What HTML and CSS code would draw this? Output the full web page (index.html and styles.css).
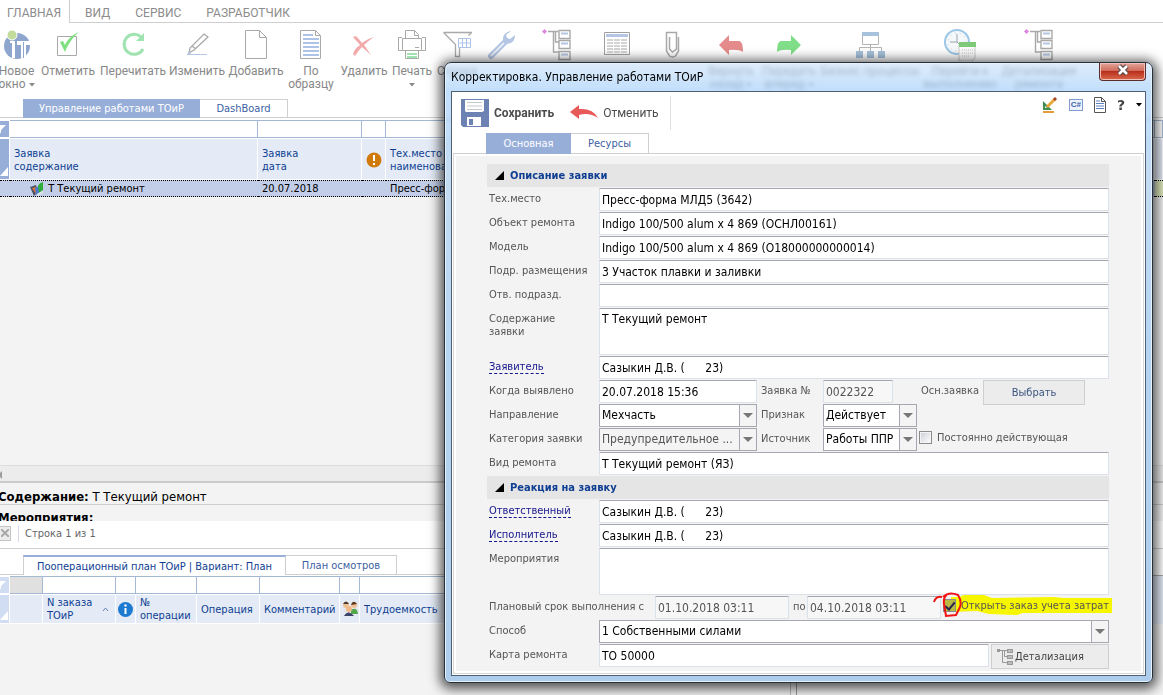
FILE: index.html
```html
<!DOCTYPE html>
<html lang="ru">
<head>
<meta charset="utf-8">
<title>Управление работами ТОиР</title>
<link rel="stylesheet" href="styles.css">
</head>
<body>
<svg class="defs" width="0" height="0" aria-hidden="true">
  <symbol id="tree" viewBox="0 0 30 32">
    <g fill="none" stroke="#a9a9a9" stroke-width="1.4"><path d="M6 2.5h10M11.500 3v20h5M13.500 3v10h3M17 1.500h11v8H17zM17 11.500h11v8H17zM17 22.500h11v8H17z"/></g>
    <path d="M19 3.500h7v2h-7zM19 13.500h7v2h-7zM19 24.500h7v2h-7z" fill="#b4c6e4"/>
    <path d="M2.500 0L5 2.500 2.500 5 0 2.500z" fill="#dd86dd"/>
  </symbol>
  <symbol id="down" viewBox="0 0 6 4"><path d="M0 0h6L3 3.500z" fill="currentColor"/></symbol>
</svg>

<div class="app">
  <nav class="menu">
    <a class="menu-item current" href="#">ГЛАВНАЯ</a>
    <a class="menu-item" href="#">ВИД</a>
    <a class="menu-item" href="#">СЕРВИС</a>
    <a class="menu-item" href="#">РАЗРАБОТЧИК</a>
  </nav>

  <div class="ribbon">
    <button class="tool w34"><svg width="28" height="32" viewBox="0 0 28 32"><circle cx="14" cy="17" r="13" fill="#8ea6cd"/><path d="M7 12h5v17H9V14H7zM14 12h13v4h-4v13h-5V16h-4z" fill="#fff"/><path d="M20.500 13v16" stroke="#8ea6cd"/><circle cx="9" cy="6" r="5" fill="#c3dc9e" stroke="#fff"/></svg><span>Новое<br>окно <svg class="dd"><use href="#down"/></svg></span></button>
    <button class="tool w66"><svg width="26" height="32" viewBox="0 0 26 32"><path d="M2.500 7.500h19v19h-19z" fill="none" stroke="#a9a9a9"/><path d="M5 13l5 10C13 15 18 8 24 3 17 6 12 11 10 16L8 12z" fill="#7fe07f"/></svg><span>Отметить</span></button>
    <button class="tool w64"><svg width="26" height="32" viewBox="0 0 26 32"><path d="M23 20a10 10 0 1 1-2-12" fill="none" stroke="#9fe3b0" stroke-width="3"/><path d="M24 4v8h-8z" fill="#9fe3b0"/></svg><span>Перечитать</span></button>
    <button class="tool w64"><svg width="26" height="32" viewBox="0 0 26 32"><path d="M5 24l1-5L20 5l4 3L10 21zM20 5l4 3M8 17l4 3" fill="none" stroke="#a9a9a9" stroke-width="1.300"/><path d="M3 25.500h20" stroke="#b4c6e4"/><path d="M3 26l2-4 2 3z" fill="#b4c6e4"/></svg><span>Изменить</span></button>
    <button class="tool w54"><svg width="24" height="32" viewBox="0 0 24 32"><path d="M1.500 1.500h14l7 7v21h-21zM15.500 1.500v7h7" fill="#fff" stroke="#a9a9a9"/></svg><span>Добавить</span></button>
    <button class="tool w56"><svg width="24" height="32" viewBox="0 0 24 32"><path d="M1.500 1.500h15l5 5v23h-20zM16.500 1.500v5h5" fill="#fff" stroke="#a9a9a9"/><path d="M4 6h10M4 10h16M4 14h16M4 18h16M4 22h16M4 26h16" stroke="#adc3e8" stroke-width="2"/></svg><span>По<br>образцу</span></button>
    <button class="tool w50"><svg width="26" height="32" viewBox="0 0 26 32"><path d="M2 8c2-1 3-1 5 1l4 5c4-3 8-5 12-6-4 3-7 5-10 8 3 4 5 7 7 10-3-3-6-5-9-8-3 3-5 6-7 9L2 25c1-4 4-7 7-9C7 13 4 11 2 8z" fill="#f2aaaa"/></svg><span>Удалить</span></button>
    <button class="tool w46"><svg width="28" height="32" viewBox="0 0 28 32"><g fill="#fff" stroke="#a9a9a9"><path d="M7.500 9V1.500h9l4 4V9M16.500 1.500v5h4M4.500 9.500h19v12h-19zM4 8.500H.5v13H4M24 8.500h3.500v13H24M7.500 21.500v8h13v-8"/></g><path d="M17 18.500h4" stroke="#a9a9a9"/><path d="M9 25h10M9 28h10" stroke="#9fe3b0" stroke-width="2"/></svg><span>Печать<br><svg class="dd"><use href="#down"/></svg></span></button>
    <button class="tool w44"><svg width="30" height="32" viewBox="0 0 30 32"><path d="M1.500 3.500h28l-3 3M1.500 3.500l12 12v12h4v-12" fill="none" stroke="#a9a9a9" stroke-width="1.300"/><path d="M16.500 9.500h12v9h-12zM20.500 9v10M24.500 9v10M16 14h13" fill="#fff" stroke="#adc3e8"/></svg><span>Строка</span></button>
    <button class="tool w44" aria-label="Сервис"><svg width="28" height="32" viewBox="0 0 28 32"><path d="M4 27L19 12" stroke="#b4c6e4" stroke-width="6" stroke-linecap="round"/><path d="M24 2l-5 4 1 3 3 1 5-4c0 7-5 10-10 8-4-3-2-11 6-12z" fill="#b4c6e4"/><path d="M4 27L17 14" stroke="#f4f7fc" stroke-width="1.500"/></svg></button>
    <button class="tool w68" aria-label="Детали"><svg width="30" height="32"><use href="#tree"/></svg></button>
    <button class="tool w52" aria-label="Формы"><svg width="28" height="32" viewBox="0 0 28 32"><path d="M1.500 3.500h25v22h-25z" fill="#fff" stroke="#a0a0a0"/><path d="M3 5h22v3H3z" fill="#b4c6e4"/><path d="M4 11h20M4 14h20M4 17h20M4 20h20M4 23h20" stroke="#a9a9a9" stroke-dasharray="6 1"/></svg></button>
    <button class="tool w58" aria-label="Файлы"><svg width="18" height="32" viewBox="0 0 18 32"><path d="M15.500 8v14l-3 5q-3 2-6 0l-3-5V3.500h10V20l-4 3-3-3V8" fill="none" stroke="#a9a9a9" stroke-width="1.500"/></svg></button>
    <button class="tool w60"><svg width="24" height="32" viewBox="0 0 24 32"><path d="M0 16L10 6v6h10q4 0 4 11-4-3-14-2v5z" fill="#e58b8b"/></svg><span>Вернуть<br>назад <svg class="dd"><use href="#down"/></svg></span></button>
    <button class="tool w56"><svg width="24" height="32" viewBox="0 0 24 32"><path d="M24 16L14 6v6H4q-4 0-4 11 4-3 14-2v5z" fill="#80de88"/></svg><span>Передать<br>вперед <svg class="dd"><use href="#down"/></svg></span></button>
    <button class="tool w106"><svg width="30" height="32" viewBox="0 0 30 32"><path d="M7.500 5.500h16v10h-16zM15.500 15.500v3M4.500 22v-3.500h22V22M15.500 18v4" fill="none" stroke="#b5b5b5"/><path d="M7 3h17v4H7zM1 22h7v7H1zM12 22h7v7h-7zM23 22h7v7h-7z" fill="#a6c2dd"/></svg><span>Бизнес процессы</span></button>
    <button class="tool w74"><svg width="32" height="32" viewBox="0 0 32 32"><circle cx="13" cy="13" r="12" fill="#f4f8fb" stroke="#9cc6e6" stroke-width="2"/><circle cx="13" cy="13" r="9" fill="none" stroke="#c3cdd3" stroke-dasharray="1 4"/><path d="M13 5v8h-7M13 13l4 4" fill="none" stroke="#9aa4ab"/><path d="M15 16h16v13l-3 3H15z" fill="#fbfbfb" stroke="#ccc"/><path d="M15 13h17v5H15z" fill="#7fc97b"/><path d="M18 21h11M18 24h11M18 27h8" stroke="#c4c4c4" stroke-dasharray="1 1"/></svg><span>Перейти к<br>выполнению</span></button>
    <button class="tool w84"><svg width="30" height="32"><use href="#tree"/></svg><span>Детализация<br>ремонта</span></button>
  </div>

  <div class="tabs">
    <button class="tab filled main-tab">Управление работами ТОиР</button>
    <button class="tab dash-tab">DashBoard</button>
  </div>

  <table class="grid orders">
    <colgroup><col class="c10"><col class="c248"><col class="c104"><col class="c24"><col><col class="c8"></colgroup>
    <tr class="filter"><td class="corner"><svg width="9" height="16"><path d="M-3 4h9L1 9v4" fill="#fff"/></svg></td><td></td><td></td><td></td><td></td><td></td></tr>
    <tr class="head"><th class="corner"><svg width="9" height="38"><path d="M8 27v9H0z" fill="#fff"/></svg></th><th>Заявка<br>содержание</th><th>Заявка<br>дата</th><th class="mid"><svg width="16" height="17" viewBox="0 0 16 17"><circle cx="8" cy="8" r="7.500" fill="#d17a0c"/><path d="M8 3v6" stroke="#fff" stroke-width="2"/><circle cx="8" cy="12" r="1.200" fill="#fff"/></svg></th><th>Тех.место<br>наименование</th><th></th></tr>
    <tr class="row"><td></td><td class="name"><svg width="16" height="14" viewBox="0 0 16 14"><path d="M1 5l6-2 2 7-4 4z" fill="#4a5468"/><path d="M3 6l4-1v7z" fill="#e37232"/><path d="M6 6l4-2v7l-3 2z" fill="#4a78d0"/><path d="M9 4q1-3 5-4v8l-4 3z" fill="#2fae3a"/><path d="M8 13l6-3" stroke="#dfe4e8" stroke-width="2"/></svg> Т Текущий ремонт</td><td>20.07.2018</td><td></td><td>Пресс-форма МЛД5</td><td class="olive"></td></tr>
  </table>

  <div class="space"></div>
  <div class="hscroll"><svg width="4" height="8"><path d="M2 0v8L-2 4z" fill="#9c9c9c"/></svg></div>
  <div class="notes">
    <p><b>Содержание:</b> Т Текущий ремонт</p>
    <p><b>Мероприятия:</b></p>
  </div>
  <div class="status">
    <button class="clear" aria-label="Очистить"><svg width="8" height="8"><path d="M0 0l8 8M8 0L0 8" stroke="#a8a8a8" stroke-width="2"/></svg></button>
    <span>Строка 1 из 1</span>
  </div>
  <div class="lower">
    <section class="plan">
      <div class="tabs low">
        <button class="tab chosen plan-tab">Пооперационный план ТОиР | Вариант: План</button>
        <button class="tab view-tab">План осмотров</button>
      </div>
      <table class="grid ops">
        <colgroup><col class="c10"><col class="c33"><col class="c73"><col class="c20"><col class="c61"><col class="c63"><col class="c80"><col class="c20"><col></colgroup>
        <tr class="filter"><td class="corner"><svg width="9" height="16"><path d="M-3 4h9L1 9v4" fill="#fff"/></svg></td><td class="grey"></td><td></td><td></td><td></td><td></td><td></td><td></td><td></td></tr>
        <tr class="head"><th class="corner"><svg width="9" height="26"><path d="M8 15v9H0z" fill="#fff"/></svg></th><th></th><th><div class="sorted"><span>N заказа<br>ТОиР</span><svg width="7" height="5"><path d="M1 4l2.500-3L6 4" fill="none" stroke="#6684bb"/></svg></div></th><th class="mid"><svg width="15" height="15" viewBox="0 0 15 15"><circle cx="7.500" cy="7.500" r="7.500" fill="#1c7bd0"/><path d="M7.500 6v6" stroke="#fff" stroke-width="2"/><circle cx="7.500" cy="3.500" r="1.200" fill="#fff"/></svg></th><th>№<br>операции</th><th>Операция</th><th>Комментарий</th><th class="mid"><svg width="16" height="16" viewBox="0 0 16 16"><circle cx="4" cy="4" r="3" fill="#f0c095"/><path d="M1 3q3-5 6 0z" fill="#46372f"/><path d="M1 11q1-5 6-3v4z" fill="#e4e4e4"/><circle cx="12" cy="4" r="3" fill="#f0c095"/><path d="M9 4q2-6 6-1z" fill="#5c3520"/><path d="M9 9q6-4 7 4H9z" fill="#54a64b"/><circle cx="7" cy="8" r="3" fill="#efb98a"/><path d="M2 15q4-7 10 0z" fill="#3d4469"/></svg></th><th>Трудоемкость</th></tr>
      </table>
    </section>
    <section class="side"><div class="side-top"></div><div class="side-head"></div></section>
  </div>
</div>

<div class="dialog" role="dialog" aria-labelledby="dlg-title">
  <header class="title">
    <h1 id="dlg-title">Корректировка. Управление работами ТОиР</h1>
    <button class="close" aria-label="Закрыть"><svg width="14" height="12" viewBox="0 0 14 12"><path d="M3 2l8 8M11 2l-8 8" stroke="#5c4a4a" stroke-width="5"/><path d="M3 2l8 8M11 2l-8 8" stroke="#fff" stroke-width="2.500"/></svg></button>
  </header>
  <div class="client">
    <div class="bar">
      <button class="act save"><svg width="28" height="28" viewBox="0 0 28 28"><path d="M0 0h28v28H2l-2-2z" fill="#6b82b2"/><path d="M4 1h19v11l-2 1H5l-1-1zM6 18h14v9H6z" fill="#fff"/><path d="M6 3.500h15M6 7h15M6 10.500h15" stroke="#c4c8cf"/><path d="M8 20h4v6H8z" fill="#6b82b2"/></svg>Сохранить</button>
      <button class="act undo"><svg width="28" height="16" viewBox="0 0 28 16"><path d="M0 7L9 0v4q14-1 19 9-9-6-19-3v4z" fill="#e85a5a"/></svg>Отменить</button>
      <div class="mini">
        <button aria-label="Дизайн"><svg width="16" height="16" viewBox="0 0 16 16"><path d="M1 4v9h9z" fill="#3e8c50"/><path d="M3 9v2h2z" fill="#fff"/><path d="M5 10l8-8" stroke="#e7a63a" stroke-width="3"/><path d="M12 3l2-2" stroke="#a44727" stroke-width="3"/><path d="M1 15h11" stroke="#e59b36" stroke-width="2"/></svg></button>
        <button class="cs">C#</button>
        <button aria-label="Документ"><svg width="12" height="16" viewBox="0 0 12 16"><path d="M.5.5h7l4 4v11H.5zM7.500.5v4h4" fill="#fff" stroke="#555"/><path d="M2 4h4M2 6.500h8M2 9h8M2 11.500h8" stroke="#5d7fc0"/></svg></button>
        <button class="help">?</button>
        <button class="more" aria-label="Ещё"><svg width="6" height="4"><use href="#down"/></svg></button>
      </div>
    </div>
    <div class="tabs dtabs">
      <button class="tab filled base-tab">Основная</button>
      <button class="tab res-tab">Ресурсы</button>
    </div>
    <form class="pane">
      <h2 class="sect"><svg width="9" height="9"><path d="M9 0v9H0z"/></svg>Описание заявки</h2>
      <div class="line"><label for="f1">Тех.место</label><input id="f1" value="Пресс-форма МЛД5 (3642)"></div>
      <div class="line"><label for="f2">Объект ремонта</label><input id="f2" value="Indigo 100/500 alum x 4 869 (ОСНЛ00161)"></div>
      <div class="line"><label for="f3">Модель</label><input id="f3" value="Indigo 100/500 alum x 4 869 (O18000000000014)"></div>
      <div class="line"><label for="f4">Подр. размещения</label><input id="f4" value="3 Участок плавки и заливки"></div>
      <div class="line"><label for="f5">Отв. подразд.</label><input id="f5"></div>
      <div class="line tall"><label for="f6">Содержание<br>заявки</label><textarea id="f6">Т Текущий ремонт</textarea></div>
      <div class="line"><label for="f7"><a href="#">Заявитель</a></label><input id="f7" value="Сазыкин Д.В. (      23)"></div>
      <div class="line"><label for="f8">Когда выявлено</label><input id="f8" class="f158" value="20.07.2018 15:36"><label class="l2" for="f9">Заявка №</label><input id="f9" class="f70 ro" value="0022322" readonly><label class="l3" for="pick">Осн.заявка</label><button type="button" id="pick" class="btn pick">Выбрать</button></div>
      <div class="line"><label for="f10">Направление</label><span class="sel f158"><select id="f10"><option>Мехчасть</option></select></span><label class="l2" for="f11">Признак</label><span class="sel f94"><select id="f11"><option>Действует</option></select></span></div>
      <div class="line"><label for="f12">Категория заявки</label><span class="sel f158 dim"><select id="f12"><option>Предупредительное ...</option></select></span><label class="l2" for="f13">Источник</label><span class="sel f94"><select id="f13"><option>Работы ППР</option></select></span><label class="check"><input type="checkbox">Постоянно действующая</label></div>
      <div class="line"><label for="f14">Вид ремонта</label><input id="f14" value="Т Текущий ремонт (ЯЗ)"></div>
      <h2 class="sect"><svg width="9" height="9"><path d="M9 0v9H0z"/></svg>Реакция на заявку</h2>
      <div class="line"><label for="f15"><a href="#">Ответственный</a></label><input id="f15" value="Сазыкин Д.В. (      23)"></div>
      <div class="line"><label for="f16"><a href="#">Исполнитель</a></label><input id="f16" value="Сазыкин Д.В. (      23)"></div>
      <div class="line tall"><label for="f17">Мероприятия</label><textarea id="f17"></textarea></div>
      <div class="line"><label class="wide" for="f18">Плановый срок выполнения с</label><input id="f18" class="f134 ro" value="01.10.2018 03:11" readonly><label class="to" for="f19">по</label><input id="f19" class="f134 ro" value="04.10.2018 03:11" readonly>
        <label class="check marked"><svg class="marker" width="172" height="20" viewBox="0 0 172 20"><path d="M10 2h8l5-2h20l8 3 60-1 12 1h48v15H82l-6 2-28-1-12-3-26 1z" fill="#f6f600"/></svg><input type="checkbox" checked>Открыть заказ учета затрат<svg class="ring" width="32" height="28" viewBox="0 0 32 28"><path d="M2 11q2-6 8-5M11 6q6-6 15-2 4 6 2 12l-4 8-10 1-2-12q-1-6 3-10" fill="none" stroke="#f21414" stroke-width="2"/></svg></label></div>
      <div class="line"><label for="f20">Способ</label><span class="sel grow"><select id="f20"><option>1 Собственными силами</option></select></span></div>
      <div class="line"><label for="f21">Карта ремонта</label><input id="f21" value="ТО 50000"><button type="button" class="btn detail"><svg width="16" height="16" viewBox="0 0 16 16"><path d="M0 1.500h6M5.500 1.500v12H11M7.500 1.500v6H11M6 1.500h5" fill="none" stroke="#999"/><path d="M0 0h3v3H0zM10 0h6v4h-6zM10 6h6v4h-6zM10 12h6v4h-6z" fill="#999"/><path d="M11 2h4M11 8h4M11 14h4" stroke="#ddd"/></svg>Детализация</button></div>
    </form>
  </div>
</div>
</body>
</html>
```
FILE: styles.css
```css
* { box-sizing: border-box; }
html, body { height: 100%; }
body {
  margin: 0;
  position: relative;
  overflow: hidden;
  background: #f3f3f3;
  font: 11px/13px "DejaVu Sans Condensed", "DejaVu Sans", sans-serif;
  color: #000;
}
button, input, select, textarea { font: inherit; margin: 0; }
button { border: 0; padding: 0; background: none; white-space: nowrap; }
.defs { position: absolute; }

.app { display: flex; flex-direction: column; min-height: 100%; }

.menu {
  display: flex;
  height: 23px;
  background: #fff;
  font: 12px/26px Roboto, sans-serif;
}
.menu-item {
  border-bottom: 1px solid #cfcfcf;
  color: #8c8c8c;
  text-decoration: none;
}
.menu-item + .menu-item { padding: 0 10px 0 15px; }
.menu-item.current { padding: 0 8px 0 7px; border-bottom: 0; border-right: 1px solid #cfcfcf; }
.menu-item:last-child { flex: 1; }

.ribbon { display: flex; height: 76px; padding-top: 6px; background: #fff; overflow: hidden; }
.tool {
  display: flex;
  flex: none;
  flex-direction: column;
  align-items: center;
  gap: 4px;
  color: #888;
  font: 12px/13px Roboto, sans-serif;
}
.tool > svg { flex: none; }
.dd { width: 6px; height: 4px; vertical-align: middle; }
.w34 { width: 33px; margin-right: 2px; } .w44 { width: 44px; } .w46 { width: 46px; } .w50 { width: 50px; }
.w52 { width: 52px; } .w54 { width: 54px; } .w56 { width: 56px; } .w58 { width: 58px; }
.w60 { width: 60px; } .w64 { width: 64px; } .w66 { width: 66px; } .w68 { width: 68px; }
.w74 { width: 74px; } .w84 { width: 84px; } .w106 { width: 106px; }

.tabs {
  display: flex;
  flex: none;
  height: 19px;
  padding-left: 23px;
  background: #fff;
  box-shadow: inset 0 -1px #cfcfcf;
}
.tab { border: 1px solid #cfcfcf; border-left: 0; background: #fff; color: #3c5fa3; }
.tab.filled { border: 0; background: #97aed9; color: #fff; }
.tab.chosen { border: 1px solid #cfcfcf; border-top: 2px solid #97aed9; border-bottom: 0; color: #0f3e92; }
.main-tab { width: 177px; }
.dash-tab { width: 88px; }
.plan-tab { width: 263px; }
.view-tab { width: 111px; }

.grid { width: 100%; border-collapse: separate; border-spacing: 0; table-layout: fixed; }
.grid th, .grid td { padding: 0 0 0 4px; text-align: left; font-weight: normal; white-space: nowrap; overflow: hidden; }
.grid .filter td { height: 18px; background: #fff; border: solid #a3b8d2; border-width: 1px 1px 1px 0; }
.grid .head th { height: 42px; background: #e4ebf6; border: solid #fff; border-width: 1px 1px 1px 0; color: #0f3e92; }
.grid .filter .corner, .grid .head .corner { padding: 0; background: #97aed9; border-color: #fff; }
.grid .mid { padding: 0; text-align: center; }
.corner svg, .mid svg { display: inline-block; vertical-align: middle; }
.orders { border-top: 2px solid #fff; }
.orders .head th { padding-top: 2px; }
.grid .row td { height: 17px; background: #c2cee7; border-top: 1px dotted #000; border-bottom: 1px dotted #000; }
.grid .row .name { padding-left: 19px; }
.name svg { vertical-align: middle; }
.grid .row .olive { background: #dfe8bd; }
.c8 { width: 8px; } .c10 { width: 10px; } .c20 { width: 20px; } .c24 { width: 24px; }
.c33 { width: 33px; } .c61 { width: 61px; } .c63 { width: 63px; } .c73 { width: 73px; }
.c80 { width: 80px; } .c104 { width: 104px; } .c248 { width: 248px; }

.space { flex: 1; }
.hscroll { flex: none; height: 18px; padding-top: 3px; border-top: 1px solid #ddd; border-bottom: 2px solid #cacaca; background: #ececec; }
.notes { flex: none; height: 38px; overflow: hidden; font-size: 13px; }
.notes p { margin: 0; height: 22px; padding-top: 3px; border-bottom: 1px solid #cfcfcf; line-height: 21px; }
.notes p + p { border: 0; padding-top: 2px; }
.notes b { margin-left: -2px; }
.status { display: flex; flex: none; align-items: center; height: 28px; padding-bottom: 2px; border-bottom: 1px solid #cfcfcf; background: #fff; color: #666; }
.clear { width: 11px; height: 15px; border: 1px solid #c4c4c4; border-left: 0; background: #ececec; }
.status span { margin-left: 7px; padding: 2px 0 2px 6px; border-left: 1px solid #d8d8ea; }
.lower { display: flex; flex: none; height: 146px; }
.plan { flex: none; width: 68%; border-right: 1px solid #bbb; }
.side { flex: 1; margin-left: 5px; border-left: 1px solid #999; }
.side-top { height: 27px; background: #fff; border-bottom: 1px solid #aaa; }
.side-head { height: 48px; background: #e4ebf6; }
.low { height: 26px; padding-top: 6px; }
.ops { border-top: 1px solid #fff; }
.ops .head th { height: 30px; }
.grid.ops .corner { background: #d0ddf3; }
.grid.ops .filter .grey { background: #e0e0e0; }
.sorted { display: flex; align-items: center; justify-content: space-between; padding-right: 6px; }

.dialog {
  position: absolute;
  top: 62px;
  left: 444px;
  right: 10px;
  padding: 0 6px 6px;
  border: 1px solid #27313d;
  border-radius: 7px 7px 6px 6px;
  background: linear-gradient(rgba(201,224,248,.6), rgba(160,205,250,.65) 28px, #c4dcf2 110px, #b4d4f2 300px, #aecdec);
  backdrop-filter: blur(2px);
  box-shadow: inset 0 0 0 1px #e5f2fc, 0 2px 12px 4px rgba(0,0,0,.65);
}
.title { display: flex; justify-content: space-between; height: 28px; }
.title h1 { margin: 0; font: 12px/28px "DejaVu Sans Condensed", "DejaVu Sans", sans-serif; white-space: nowrap; }
.close {
  width: 47px;
  height: 18px;
  border: 1px solid #5a2c2a;
  border-top: 0;
  border-radius: 0 0 4px 4px;
  background: linear-gradient(#e2a79d, #cf6c5b 45%, #b92f1c 50%, #d96a4c);
  box-shadow: inset 0 0 0 1px #f0c0b8;
}
.client { padding: 1px; border: 1px solid #4f6072; background: #fff; }
.bar { display: flex; align-items: center; height: 40px; padding-left: 8px; color: #4d4d4d; font: 12px/16px Roboto, sans-serif; }
.act { display: flex; align-items: center; gap: 5px; color: inherit; }
.save { font-weight: bold; }
.undo { margin-left: 16px; padding: 9px 11px 9px 0; border-right: 1px solid #e0e0e0; }
.mini { display: flex; align-items: center; gap: 11px; height: 24px; margin: 0 2px 16px auto; }
.mini button { display: flex; }
.mini .cs { width: 14px; height: 12px; border: 1px solid #7f9bd0; background: #edf2fb; color: #3c64ae; font: bold 8px/9px "Liberation Sans", sans-serif; justify-content: center; }
.mini .help { color: #444; font: bold 14px/16px "DejaVu Sans", sans-serif; }
.more { color: #000; }
.dtabs { height: 21px; padding-left: 33px; }
.base-tab { width: 85px; }
.res-tab { width: 78px; }
.pane { padding: 10px 34px 5px 33px; border: 1px solid #d8d8d8; border-top: 0; background: #f3f3f3; box-shadow: inset 0 0 0 2px #fff; }
.sect {
  display: flex;
  align-items: center;
  gap: 6px;
  height: 23px;
  margin: 0 0 1px;
  padding-left: 8px;
  background: #e5e5e5;
  color: #0f3e92;
  font: bold 11px/13px "DejaVu Sans Condensed", "DejaVu Sans", sans-serif;
}
.line { display: flex; align-items: flex-start; height: 24px; color: #555; }
.tall { height: 48px; }
.line > label { flex: none; width: 112px; padding: 4px 0 0 2px; white-space: nowrap; }
.line > .l2 { width: 66px; padding-left: 4px; }
.line > .l3 { width: 90px; padding-left: 28px; }
.line > .wide { width: 168px; }
.line > .to { width: 18px; padding-left: 4px; }
.line a { color: #14148c; text-decoration: none; border-bottom: 1px dashed #14148c; }
.line > input, textarea {
  flex: 1;
  min-width: 0;
  height: 23px;
  padding: 0 2px;
  border: 1px solid #dbe1ea;
  border-top-color: #a7a7b0;
  border-radius: 1px;
  outline: 0;
  background: #fff;
  color: #000;
  font-size: 12px;
}
.line > textarea { height: 47px; padding: 4px 2px; resize: none; }
.line > .ro { background: #f7f7f7; color: #555; }
.line > .f70 { flex: none; width: 70px; }
.line > .f134 { flex: none; width: 134px; }
.line > .f158 { flex: none; width: 158px; }
.f94 { flex: none; width: 94px; }
.grow { flex: 1; }
.sel { position: relative; height: 23px; border: 1px solid #a7a7b0; background: #fff; }
.sel select { width: 100%; height: 21px; padding: 0 16px 0 2px; border: 0; outline: 0; appearance: none; background: none; color: #000; font-size: 12px; }
.sel::before { content: ""; position: absolute; right: 0; width: 16px; height: 21px; border-left: 1px solid #a7a7b0; background: #f4f4f4; }
.sel::after { content: ""; position: absolute; right: 3px; top: 8px; border: 5px solid transparent; border-top-color: #777; border-bottom: 0; }
.sel.dim { background: #f4f4f4; }
.sel.dim select { color: #555; }
.btn { height: 25px; border: 1px solid #cfcfcf; background: #ececec; color: #3c5680; }
.pick { width: 102px; }
.detail { display: flex; align-items: center; gap: 2px; width: 118px; margin-left: 2px; padding-left: 5px; color: #444; }
.line > .check { display: flex; align-items: center; gap: 5px; position: relative; width: auto; padding: 3px 0 0 2px; }
.check input { width: 13px; height: 13px; margin: 0; }
.check input { appearance: none; border: 1px solid #8c8c8c; background: linear-gradient(135deg, #c9ced6, #fff); box-shadow: inset 0 0 0 1px #f4f4f4; }
.check input:checked { background: #b8b844; box-shadow: none; position: relative; }
.check input:checked::after { content: ""; position: absolute; left: 3px; top: 0; width: 4px; height: 8px; border: solid #26264a; border-width: 0 2px 2px 0; transform: rotate(40deg); }
.marked { z-index: 0; }
.marker { position: absolute; left: 0; top: -1px; z-index: -1; }
.ring { position: absolute; left: -9px; top: -5px; }
```
